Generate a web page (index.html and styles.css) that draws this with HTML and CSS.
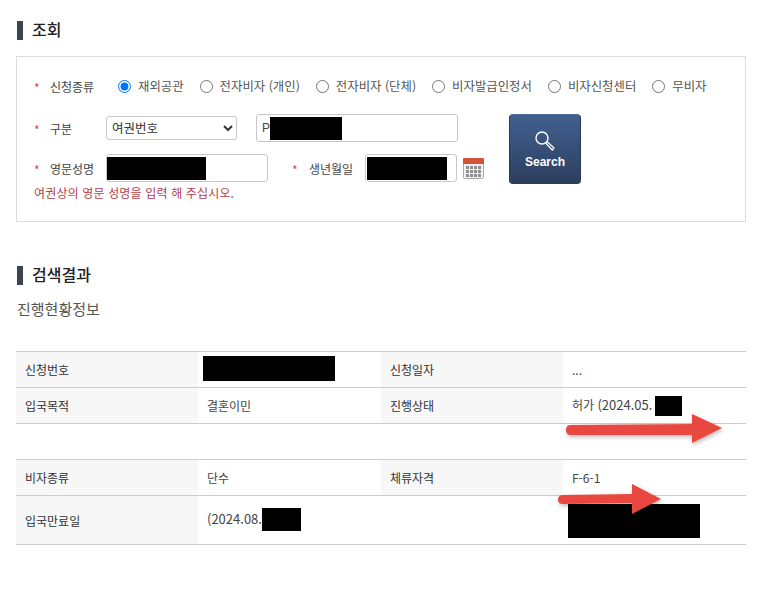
FILE: index.html
```html
<!DOCTYPE html>
<html lang="ko">
<head>
<meta charset="utf-8">
<title>조회</title>
<link rel="stylesheet" href="styles.css">
</head>
<body>
<main class="page">
  <h2 class="heading">조회</h2>
  <form class="search-box">
    <div class="fields">
      <div class="row row-type">
        <span class="req">*</span><span class="label">신청종류</span>
        <div class="radios">
          <label class="radio"><input type="radio" name="t" checked>재외공관</label>
          <label class="radio"><input type="radio" name="t">전자비자 (개인)</label>
          <label class="radio"><input type="radio" name="t">전자비자 (단체)</label>
          <label class="radio"><input type="radio" name="t">비자발급인정서</label>
          <label class="radio"><input type="radio" name="t">비자신청센터</label>
          <label class="radio"><input type="radio" name="t">무비자</label>
        </div>
      </div>
      <div class="lower">
        <div class="lower-fields">
          <div class="row row-kind">
            <span class="req">*</span><span class="label label-short">구분</span>
            <select class="select"><option>여권번호</option></select>
            <div class="text-field field-passport">P<span class="black black-passport"></span></div>
          </div>
          <div class="row row-name">
            <span class="req">*</span><span class="label label-short">영문성명</span>
            <div class="text-field field-name"><span class="black black-name"></span></div>
            <span class="req req-birth">*</span><span class="label label-birth">생년월일</span>
            <div class="text-field field-birth"><span class="black black-birth"></span></div>
            <svg class="calendar" width="21" height="21" viewBox="0 0 21 21" aria-hidden="true">
              <rect x="0.5" y="0.5" width="20" height="20" rx="1" fill="#f1f1f1" stroke="#a8a8a8"/>
              <rect x="0" y="0" width="21" height="6" rx="1" fill="#d2553a"/>
              <g fill="#8e8e8e">
                <rect x="3" y="8" width="3" height="3"/><rect x="7" y="8" width="3" height="3"/><rect x="11" y="8" width="3" height="3"/><rect x="15" y="8" width="3" height="3"/>
                <rect x="3" y="12" width="3" height="3"/><rect x="7" y="12" width="3" height="3"/><rect x="11" y="12" width="3" height="3"/><rect x="15" y="12" width="3" height="3"/>
                <rect x="3" y="16" width="3" height="3"/><rect x="7" y="16" width="3" height="3"/><rect x="11" y="16" width="3" height="3"/><rect x="15" y="16" width="3" height="3"/>
              </g>
            </svg>
          </div>
          <p class="hint">여권상의 영문 성명을 입력 해 주십시오.</p>
        </div>
        <button type="button" class="search-btn">
          <svg width="22" height="22" viewBox="0 0 22 22" aria-hidden="true">
            <circle cx="8" cy="8" r="6" fill="none" stroke="#fff" stroke-width="1.4"/>
            <path d="M12.5 12.5 L14 12.5 L20 18 L18.3 20 L12.5 14 Z" fill="none" stroke="#fff" stroke-width="1.2" stroke-linejoin="round"/>
          </svg>
          <span>Search</span>
        </button>
      </div>
    </div>
  </form>

  <h2 class="heading heading-result">검색결과</h2>
  <h3 class="subheading">진행현황정보</h3>

  <table class="info info-first">
    <tr class="r36">
      <th class="col-a">신청번호</th><td class="col-b"><span class="black black-no"></span></td>
      <th class="col-a">신청일자</th><td class="col-b">...</td>
    </tr>
    <tr class="r36">
      <th>입국목적</th><td>결혼이민</td>
      <th>진행상태</th><td>허가 <span class="num">(2024.05.</span><span class="black black-status"></span></td>
    </tr>
  </table>
  <table class="info">
    <tr class="r36">
      <th class="col-a">비자종류</th><td class="col-b">단수</td>
      <th class="col-a">체류자격</th><td class="col-b">F-6-1</td>
    </tr>
    <tr class="r49">
      <th>입국만료일</th><td><span class="num">(2024.08.</span><span class="black black-exp"></span></td>
      <td></td><td><span class="black black-large"></span></td>
    </tr>
  </table>

  <svg class="arrow arrow-a" width="170" height="44" viewBox="0 0 170 44" aria-hidden="true">
    <path d="M5 12 L127 11 L127 1 L157 15 L127 30 L127 22 L5 22 Q1 21.5 1 17 Q1 12.5 5 12 Z" fill="#e8483f"/>
  </svg>
  <svg class="arrow arrow-b" width="116" height="44" viewBox="0 0 116 44" aria-hidden="true">
    <path d="M5 11 L75 10 L75 0 L104 15 L75 30 L75 19 L5 20 Q1 19.5 1 15.5 Q1 11.5 5 11 Z" fill="#e8483f"/>
  </svg>
</main>
</body>
</html>
```
FILE: styles.css
```css
* { box-sizing: border-box; }
html, body { margin: 0; padding: 0; background: #fff; }
body {
  font-family: "Noto Sans CJK KR", "Noto Sans", sans-serif;
  font-size: 12px;
  color: #444;
  height: 600px;
  overflow: hidden;
}
.page { position: relative; padding: 21px 19px 0 16px; width: 765px; }

.heading {
  margin: 0 0 0 1px;
  padding-left: 9px;
  border-left: 6px solid #3b4450;
  height: 19px;
  line-height: 16px;
  font-size: 16px;
  font-weight: 500;
  color: #222;
}
.heading-result { margin-top: 44px; }
.subheading {
  margin: 14px 0 0 1px;
  height: 20px;
  line-height: 20px;
  font-size: 15px;
  font-weight: 400;
  color: #555;
}

.search-box {
  margin-top: 16px;
  height: 166px;
  border: 1px solid #dcdcdc;
  padding: 21px 0 0 17px;
}
.row { display: flex; align-items: center; }
.row-type { height: 17px; }
.req { width: 16px; color: #e04848; font-size: 12px; line-height: 12px; padding-top: 3px; }
.label { width: 68px; color: #444; line-height: 17px; }
.label-short { width: 56px; }
.radios { display: flex; gap: 16px; }
.radio { display: flex; align-items: center; gap: 7px; color: #555; font-size: 12.4px; line-height: 17px; white-space: nowrap; }
.radio input { margin: 0; width: 13px; height: 13px; }

.lower { display: flex; align-items: flex-start; margin-top: 19px; }
.lower-fields { width: 475px; }
.row-kind { height: 28px; }
.row-name { height: 28px; margin-top: 12px; }
.select {
  width: 131px;
  height: 24px;
  padding: 0 0 2px 1px;
  border: 1px solid #c8c8c8;
  border-radius: 3px;
  background-color: #fff;
  color: #333;
  font: 12.5px "Noto Sans CJK KR", sans-serif;
}
.text-field {
  height: 28px;
  border: 1px solid #c8c8c8;
  border-radius: 3px;
  background: #fff;
  display: flex;
  align-items: center;
  font: 12px "Liberation Sans", sans-serif;
  color: #444;
}
.field-passport { width: 202px; margin-left: 19px; padding-left: 5px; }
.field-name { width: 162px; padding-left: 0; }
.field-birth { width: 92px; }
.req-birth { margin-left: 24px; width: 17px; }
.label-birth { width: 56px; }
.calendar { margin-left: 6px; }
.black { display: inline-block; background: #000; }
.black-passport { width: 72px; height: 23px; }
.black-name { width: 99px; height: 23px; }
.black-birth { width: 80px; height: 23px; margin-left: 1px; }
.hint { margin: 2px 0 0; color: #b5404c; line-height: 17px; font-size: 12px; letter-spacing: .15px; }

.search-btn {
  width: 72px;
  height: 70px;
  padding: 15px 0 0;
  display: flex;
  flex-direction: column;
  align-items: center;
  gap: 3px;
  border: 1px solid #2a3a55;
  border-top-color: #4c6a9a;
  border-radius: 4px;
  background: linear-gradient(#41608f, #2c3e5e);
  color: #fff;
  font: bold 12px/14px "Liberation Sans", sans-serif;
}

.info { width: 730px; table-layout: fixed; border-collapse: collapse; border-top: 1px solid #ccc; }
.info-first { margin-top: 32px; margin-bottom: 35px; }
.col-a { width: 182px; }
.col-b { width: 183px; }
.info th, .info td {
  border-bottom: 1px solid #ccc;
  padding: 0 0 0 9px;
  font-size: 12px;
  font-weight: 400;
  text-align: left;
  color: #444;
  white-space: nowrap;
  overflow: visible;
  vertical-align: middle;
}
.info th { background: #f7f7f7; color: #333; }
.r36 { height: 36px; }
.r49 { height: 49px; }
.num { font-size: 13px; }
.info .black { vertical-align: middle; }
.black-no { width: 132px; height: 25px; margin-left: -4px; margin-bottom: 2px; }
.black-status { width: 27px; height: 20px; margin-left: 3px; }
.black-exp { width: 39px; height: 23px; margin-bottom: 2px; }
.black-large { width: 132px; height: 34px; margin-left: -4px; margin-top: 2px; }

.arrow { position: absolute; filter: drop-shadow(1px 2px 2px rgba(0,0,0,.28)); }
.arrow-a { left: 565px; top: 413px; }
.arrow-b { left: 557px; top: 484px; }
```
